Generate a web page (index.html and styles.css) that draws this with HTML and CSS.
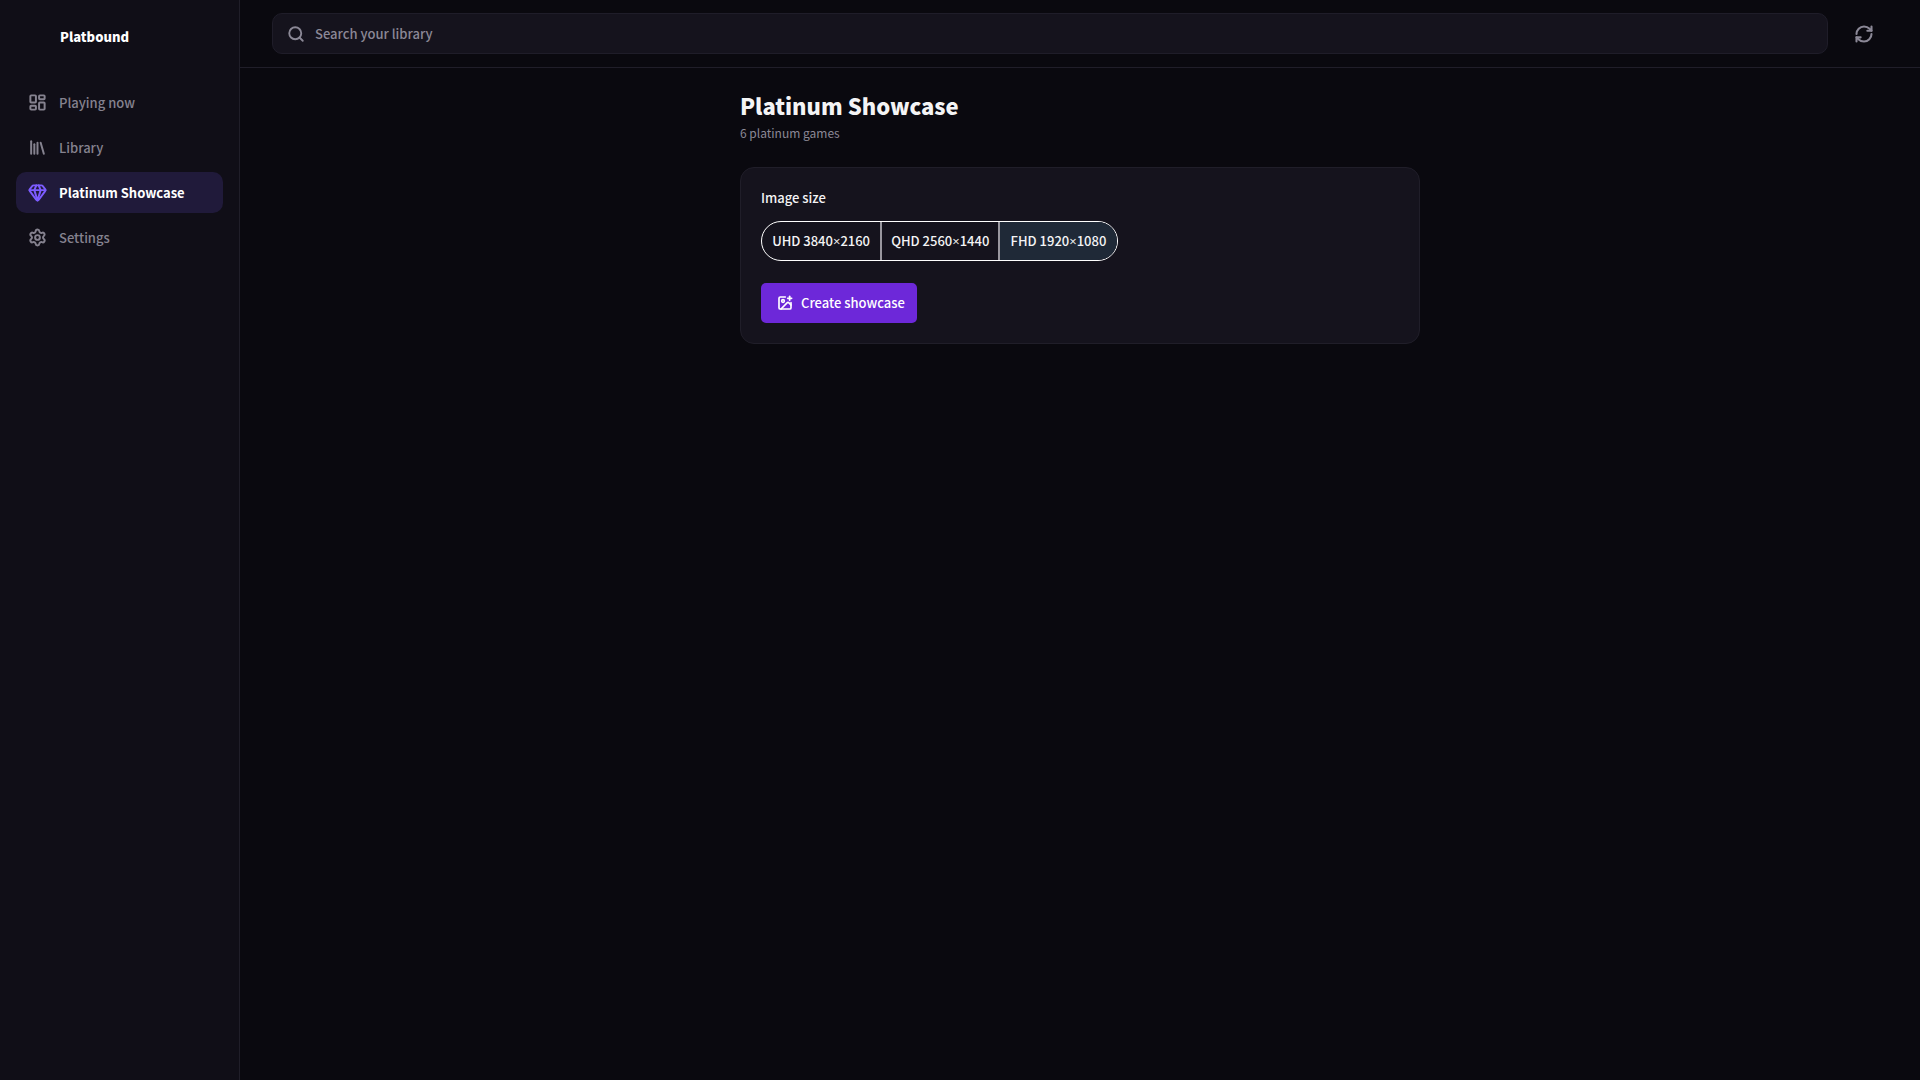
FILE: index.html
```html
<!DOCTYPE html>
<html lang="en">
<head>
  <meta charset="UTF-8" />
  <meta name="viewport" content="width=device-width, initial-scale=1" />
  <title>Platbound - Platinum Showcase</title>
  <link rel="stylesheet" href="styles.css">
</head>
<body>
  <div class="app">
    <aside class="sidebar">
      <div class="brand">Platbound</div>
      <nav class="nav">
        <a href="#playing" class="nav-item">
          <svg class="icon" viewBox="0 0 24 24"><rect x="3" y="3" width="7" height="9" rx="1"/><rect x="14" y="3" width="7" height="5" rx="1"/><rect x="14" y="12" width="7" height="9" rx="1"/><rect x="3" y="16" width="7" height="5" rx="1"/></svg>
          Playing now
        </a>
        <a href="#library" class="nav-item">
          <svg class="icon" viewBox="0 0 24 24"><path d="m16 6 4 14"/><path d="M12 6v14"/><path d="M8 8v12"/><path d="M4 4v16"/></svg>
          Library
        </a>
        <a href="#showcase" class="nav-item active" aria-current="page">
          <svg class="icon" viewBox="0 0 24 24"><path d="M10.500 3 8 9l4 13 4-13-2.500-6"/><path d="M17 3a2 2 0 0 1 1.600.8l3 4a2 2 0 0 1 .013 2.382l-7.990 10.986a2 2 0 0 1-3.247 0l-7.990-10.986A2 2 0 0 1 2.400 7.800l2.998-3.997A2 2 0 0 1 7 3z"/><path d="M2 9h20"/></svg>
          Platinum Showcase
        </a>
        <a href="#settings" class="nav-item">
          <svg class="icon" viewBox="0 0 24 24"><path d="M9.671 4.136a2.340 2.340 0 0 1 4.659 0 2.340 2.340 0 0 0 3.319 1.915 2.340 2.340 0 0 1 2.330 4.033 2.340 2.340 0 0 0 0 3.831 2.340 2.340 0 0 1-2.330 4.033 2.340 2.340 0 0 0-3.319 1.915 2.340 2.340 0 0 1-4.659 0 2.340 2.340 0 0 0-3.320-1.915 2.340 2.340 0 0 1-2.330-4.033 2.340 2.340 0 0 0 0-3.831A2.340 2.340 0 0 1 6.350 6.051a2.340 2.340 0 0 0 3.319-1.915"/><circle cx="12" cy="12" r="3"/></svg>
          Settings
        </a>
      </nav>
    </aside>

    <div class="content">
      <header class="topbar">
        <label class="search">
          <svg class="icon" viewBox="0 0 24 24"><circle cx="11" cy="11" r="8"/><path d="m21 21-4.340-4.340"/></svg>
          <input type="text" placeholder="Search your library" aria-label="Search your library" />
        </label>
        <button type="button" class="refresh" aria-label="Refresh">
          <svg class="icon" viewBox="0 0 24 24"><path d="M3 12a9 9 0 0 1 9-9 9.750 9.750 0 0 1 6.740 2.740L21 8"/><path d="M21 3v5h-5"/><path d="M21 12a9 9 0 0 1-9 9 9.750 9.750 0 0 1-6.740-2.740L3 16"/><path d="M8 16H3v5"/></svg>
        </button>
      </header>

      <main class="page">
        <h1>Platinum Showcase</h1>
        <p class="subtitle">6 platinum games</p>

        <section class="card">
          <h2 id="size-label">Image size</h2>
          <div class="segments" role="radiogroup" aria-labelledby="size-label">
            <label><input type="radio" name="size" value="uhd" /><span>UHD 3840<i>×</i>2160</span></label>
            <label><input type="radio" name="size" value="qhd" /><span>QHD 2560<i>×</i>1440</span></label>
            <label><input type="radio" name="size" value="fhd" checked /><span>FHD 1920<i>×</i>1080</span></label>
          </div>
          <button type="button" class="create">
            <svg class="icon" viewBox="0 0 24 24"><path d="M16 5h6"/><path d="M19 2v6"/><path d="M21 11.500V19a2 2 0 0 1-2 2H5a2 2 0 0 1-2-2V5a2 2 0 0 1 2-2h7.500"/><path d="m21 15-3.086-3.086a2 2 0 0 0-2.828 0L6 21"/><circle cx="9" cy="9" r="2"/></svg>
            Create showcase
          </button>
        </section>
      </main>
    </div>
  </div>
</body>
</html>
```
FILE: styles.css
```css
* {
  box-sizing: border-box;
}
body {
  margin: 0;
  background: #0a090f;
  color: #f4f4f5;
  font-family: "Noto Sans CJK SC", "Noto Sans", sans-serif;
  font-size: 13px;
  line-height: 20px;
}
button,
input {
  font: inherit;
  color: inherit;
}
.icon {
  width: 20px;
  height: 20px;
  flex: none;
  fill: none;
  stroke: currentColor;
  stroke-width: 2.5;
  stroke-linecap: round;
  stroke-linejoin: round;
}
.app {
  display: flex;
  min-height: 100vh;
}

/* sidebar */
.sidebar {
  width: 240px;
  flex: none;
  padding: 16px;
  background: #100e17;
  border-right: 1px solid #201e29;
}
.brand {
  padding: 11px 44px;
  margin-bottom: 24px;
  font-weight: 900;
  color: #fff;
}
.nav {
  display: flex;
  flex-direction: column;
  gap: 4px;
}
.nav-item {
  display: flex;
  align-items: center;
  gap: 12px;
  height: 41px;
  padding: 0 12px;
  border-radius: 10px;
  color: #85828f;
  font-weight: 500;
  text-decoration: none;
}
.nav-item .icon {
  width: 19px;
  height: 19px;
}
.nav-item.active {
  background: #201a3a;
  color: #fff;
  font-weight: 700;
}
.nav-item.active .icon {
  color: #7c5cff;
}

/* top bar */
.content {
  flex: 1;
  min-width: 0;
}
.topbar {
  display: flex;
  align-items: center;
  gap: 12px;
  height: 68px;
  padding: 0 32px;
  border-bottom: 1px solid #201e29;
}
.search {
  flex: 1;
  display: flex;
  align-items: center;
  gap: 10px;
  height: 41px;
  padding: 0 14px;
  background: #15131d;
  border: 1px solid #1f1d29;
  border-radius: 10px;
  color: #8b8896;
}
.search .icon {
  width: 18px;
  height: 18px;
}
.search input {
  flex: 1;
  padding: 0;
  background: none;
  border: 0;
  outline: 0;
  font-weight: 500;
}
.search input::placeholder {
  color: #8b8896;
  opacity: 1;
}
.refresh {
  display: flex;
  align-items: center;
  justify-content: center;
  width: 48px;
  height: 40px;
  padding: 0;
  background: none;
  border: 0;
  color: #8b8896;
}

/* page */
.page {
  max-width: 680px;
  margin: 0 auto;
  padding: 19px 0;
}
h1 {
  margin: 0;
  font-size: 22px;
  line-height: 36px;
  font-weight: 900;
}
.subtitle {
  margin: 0 0 24px;
  font-size: 12px;
  color: #8b8896;
}
.card {
  padding: 20px;
  background: #15131d;
  border: 1px solid #201e29;
  border-radius: 14px;
}
h2 {
  margin: 0 0 13px;
  font-size: 13px;
  line-height: 20px;
  font-weight: 500;
}
.segments {
  display: inline-grid;
  grid-template-columns: repeat(3, 1fr);
  height: 40px;
  margin-bottom: 22px;
  border: 1px solid #fff;
  border-radius: 20px;
  overflow: hidden;
  font-weight: 500;
  vertical-align: top;
}
.segments label {
  display: flex;
}
.segments label + label {
  border-left: 2px solid #99979f;
}
.segments input {
  appearance: none;
  width: 0;
  margin: 0;
}
.segments span {
  flex: 1;
  display: flex;
  align-items: center;
  justify-content: center;
  padding: 0 9px;
  white-space: pre;
}
.segments i {
  font-family: "Open Sans", sans-serif;
  font-style: normal;
}
.segments input:checked + span {
  background: #1f2937;
}
.create {
  display: flex;
  align-items: center;
  gap: 8px;
  height: 40px;
  padding: 0 12px 0 16px;
  background: #6d28d9;
  border: 0;
  border-radius: 5px;
  color: #fff;
  font-weight: 500;
}
.create .icon {
  width: 16px;
  height: 16px;
}
```
